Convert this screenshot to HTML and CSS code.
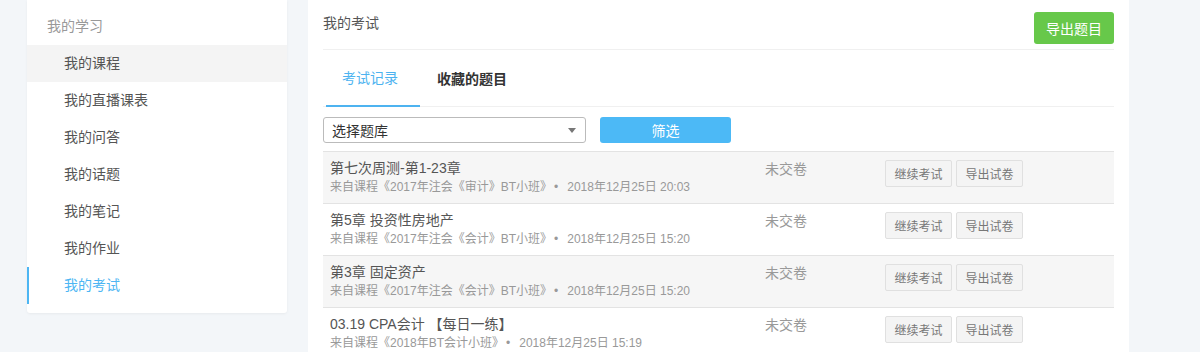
FILE: index.html
```html
<!DOCTYPE html>
<html lang="zh-CN">
  <head>
    <meta charset="UTF-8" />
    <meta name="viewport" content="width=device-width, initial-scale=1.0" />
    <title>我的考试</title>
    <link rel="stylesheet" href="styles.css">
  </head>
  <body>
    <div class="page">
      <div class="sidebar">
        <div class="side-title">我的学习</div>
        <a class="side-item hover">我的课程</a>
        <a class="side-item">我的直播课表</a>
        <a class="side-item">我的问答</a>
        <a class="side-item">我的话题</a>
        <a class="side-item">我的笔记</a>
        <a class="side-item">我的作业</a>
        <a class="side-item active">我的考试</a>
      </div>

      <div class="main">
        <div class="main-head">
          <span class="main-title">我的考试</span>
          <button class="btn-green">导出题目</button>
        </div>

        <div class="tabs">
          <div class="tab active">考试记录</div>
          <div class="tab">收藏的题目</div>
        </div>

        <div class="filter">
          <div class="select">
            <span>选择题库</span>
            <i class="arrow"></i>
          </div>
          <button class="btn-blue">筛选</button>
        </div>

        <div class="list">
          <div class="row gray">
            <div class="info">
              <div class="name">第七次周测-第1-23章</div>
              <div class="meta">来自课程《2017年注会《审计》BT小班》<span class="dot">•</span>2018年12月25日 20:03</div>
            </div>
            <div class="status">未交卷</div>
            <div class="actions">
              <button class="btn-small">继续考试</button>
              <button class="btn-small">导出试卷</button>
            </div>
          </div>
          <div class="row">
            <div class="info">
              <div class="name">第5章 投资性房地产</div>
              <div class="meta">来自课程《2017年注会《会计》BT小班》<span class="dot">•</span>2018年12月25日 15:20</div>
            </div>
            <div class="status">未交卷</div>
            <div class="actions">
              <button class="btn-small">继续考试</button>
              <button class="btn-small">导出试卷</button>
            </div>
          </div>
          <div class="row gray">
            <div class="info">
              <div class="name">第3章 固定资产</div>
              <div class="meta">来自课程《2017年注会《会计》BT小班》<span class="dot">•</span>2018年12月25日 15:20</div>
            </div>
            <div class="status">未交卷</div>
            <div class="actions">
              <button class="btn-small">继续考试</button>
              <button class="btn-small">导出试卷</button>
            </div>
          </div>
          <div class="row">
            <div class="info">
              <div class="name">03.19 CPA会计 【每日一练】</div>
              <div class="meta">来自课程《2018年BT会计小班》<span class="dot">•</span>2018年12月25日 15:19</div>
            </div>
            <div class="status">未交卷</div>
            <div class="actions">
              <button class="btn-small">继续考试</button>
              <button class="btn-small">导出试卷</button>
            </div>
          </div>
        </div>
      </div>
    </div>
  </body>
</html>
```

FILE: styles.css
```css
body {
  margin: 0;
  padding: 0;
  background-color: #f3f6f9;
  font-family: "Liberation Sans", "Noto Sans CJK SC", sans-serif;
  font-size: 14px;
  color: #555;
}

.page {
  display: flex;
  align-items: flex-start;
  gap: 21px;
  padding-left: 27px;
  height: 352px;
  overflow: hidden;
}

.sidebar {
  width: 260px;
  background: #fff;
  padding: 8px 0 9px;
  border-radius: 0 0 3px 3px;
  box-shadow: 0 1px 3px rgba(0, 0, 0, 0.05);
}

.side-title {
  height: 37px;
  line-height: 37px;
  padding-left: 20px;
  color: #999;
}

.side-item {
  display: block;
  height: 37px;
  line-height: 37px;
  padding-left: 37px;
  color: #555;
}

.side-item.hover {
  background-color: #f4f4f4;
}

.side-item.active {
  color: #4db6f3;
  border-left: 2px solid #4db6f3;
  padding-left: 35px;
}

.main {
  width: 791px;
  height: 360px;
  background: #fff;
  padding: 12px 15px 0;
}

.main-head {
  display: flex;
  justify-content: space-between;
  align-items: center;
  height: 32px;
  padding-bottom: 5px;
  border-bottom: 1px solid #f0f0f0;
}

.main-title {
  align-self: flex-start;
  margin-top: 1px;
  line-height: 20px;
  color: #555;
}

.btn-green {
  width: 80px;
  height: 32px;
  border: none;
  border-radius: 3px;
  background-color: #67c84a;
  color: #fff;
  font-family: inherit;
  font-size: 14px;
  padding: 0;
}

.tabs {
  display: flex;
  height: 56px;
  border-bottom: 1px solid #f0f0f0;
}

.tab {
  line-height: 58px;
  padding: 0 17px;
  color: #333;
  font-weight: bold;
}

.tab.active {
  color: #4db3f0;
  font-weight: normal;
  margin-left: 3px;
  padding: 0 22px 0 16px;
  border-bottom: 2px solid #4db3f0;
  line-height: 56px;
  margin-bottom: -1px;
}

.filter {
  display: flex;
  gap: 14px;
  margin-top: 10px;
  margin-bottom: 8px;
}

.select {
  display: flex;
  align-items: center;
  justify-content: space-between;
  width: 245px;
  height: 24px;
  padding: 0 8px;
  border: 1px solid #bbb;
  border-radius: 3px;
  color: #333;
}

.arrow {
  width: 0;
  height: 0;
  border-left: 4px solid transparent;
  border-right: 4px solid transparent;
  border-top: 5px solid #777;
  margin-right: 1px;
}

.btn-blue {
  width: 131px;
  height: 26px;
  border: none;
  border-radius: 3px;
  background-color: #4cb9f6;
  color: #fff;
  font-family: inherit;
  font-size: 14px;
  padding: 0;
}

.row {
  display: grid;
  grid-template-columns: 435px 120px auto;
  padding: 6px 7px 7px;
  border-top: 1px solid #e3e3e3;
}

.row.gray {
  background-color: #f6f6f6;
}

.name {
  line-height: 20px;
  color: #555;
}

.meta {
  line-height: 18px;
  font-size: 12px;
  color: #999;
}

.dot {
  margin: 0 9px 0 2px;
}

.status {
  line-height: 22px;
  color: #999;
}

.actions {
  display: flex;
  gap: 4px;
  padding-top: 2px;
}

.btn-small {
  width: 67px;
  height: 27px;
  padding: 0;
  border: 1px solid #e0e0e0;
  border-radius: 2px;
  background-color: #f4f4f4;
  color: #777;
  font-family: inherit;
  font-size: 12px;
}
```
